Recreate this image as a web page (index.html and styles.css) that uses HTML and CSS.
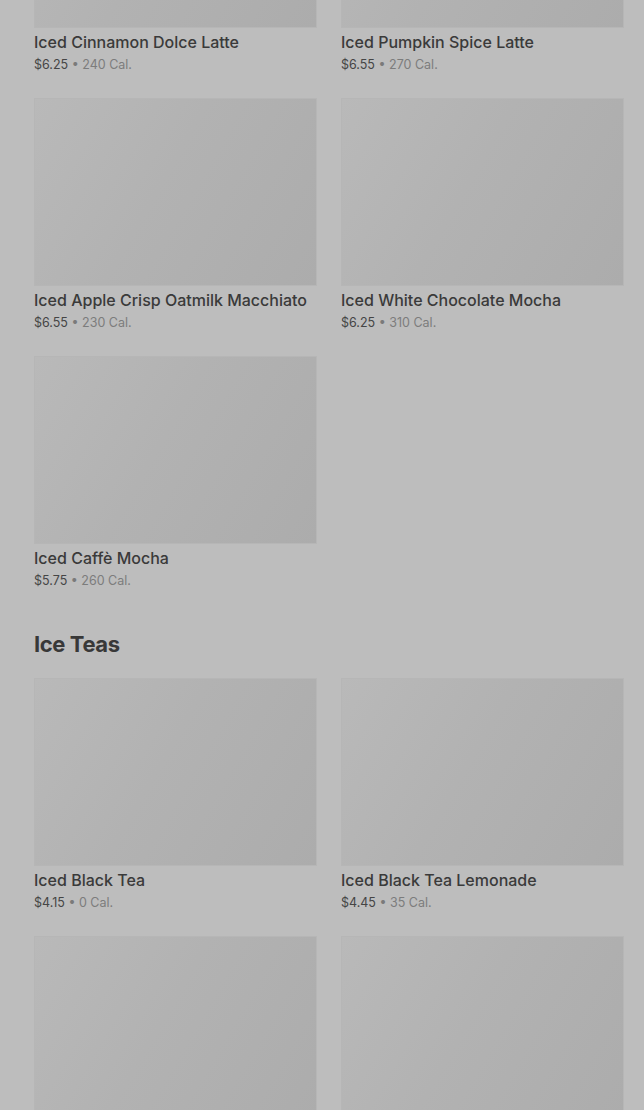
FILE: index.html
```html
<!DOCTYPE html>
<html lang="en">
<head>
    <meta charset="UTF-8">
    <meta name="viewport" content="width=device-width, initial-scale=1.0">
    <title>Menu - Iced Drinks</title>
    <link rel="stylesheet" href="styles.css">
</head>
<body>
    <div class="menu">
        <!-- Iced Coffees -->
        <section class="category first">
            <div class="product-grid">
                <div class="product">
                    <div class="product-img"></div>
                    <h3 class="product-name">Iced Cinnamon Dolce Latte</h3>
                    <p class="product-meta"><span class="price">$6.25</span> • <span class="cal">240 Cal.</span></p>
                </div>
                <div class="product">
                    <div class="product-img"></div>
                    <h3 class="product-name">Iced Pumpkin Spice Latte</h3>
                    <p class="product-meta"><span class="price">$6.55</span> • <span class="cal">270 Cal.</span></p>
                </div>
                <div class="product">
                    <div class="product-img"></div>
                    <h3 class="product-name">Iced Apple Crisp Oatmilk Macchiato</h3>
                    <p class="product-meta"><span class="price">$6.55</span> • <span class="cal">230 Cal.</span></p>
                </div>
                <div class="product">
                    <div class="product-img"></div>
                    <h3 class="product-name">Iced White Chocolate Mocha</h3>
                    <p class="product-meta"><span class="price">$6.25</span> • <span class="cal">310 Cal.</span></p>
                </div>
                <div class="product">
                    <div class="product-img"></div>
                    <h3 class="product-name">Iced Caffè Mocha</h3>
                    <p class="product-meta"><span class="price">$5.75</span> • <span class="cal">260 Cal.</span></p>
                </div>
            </div>
        </section>

        <!-- Ice Teas -->
        <section class="category">
            <h2 class="category-title">Ice Teas</h2>
            <div class="product-grid">
                <div class="product">
                    <div class="product-img"></div>
                    <h3 class="product-name">Iced Black Tea</h3>
                    <p class="product-meta"><span class="price">$4.15</span> • <span class="cal">0 Cal.</span></p>
                </div>
                <div class="product">
                    <div class="product-img"></div>
                    <h3 class="product-name">Iced Black Tea Lemonade</h3>
                    <p class="product-meta"><span class="price">$4.45</span> • <span class="cal">35 Cal.</span></p>
                </div>
                <div class="product">
                    <div class="product-img"></div>
                </div>
                <div class="product">
                    <div class="product-img"></div>
                </div>
            </div>
        </section>
    </div>
</body>
</html>
```

FILE: styles.css
```css
* {
    margin: 0;
    padding: 0;
    box-sizing: border-box;
}

body {
    background: #bdbdbd;
    font-family: 'Inter', 'Noto Sans', sans-serif;
    overflow: hidden;
    height: 1110px;
}

.menu {
    padding: 0 20px 0 34px;
}

.category.first {
    margin-top: -160px;
}

.category-title {
    font-size: 22px;
    font-weight: 700;
    color: #383838;
    letter-spacing: -0.4px;
    line-height: 28px;
    padding: 16px 0 20px;
}

.product-grid {
    display: grid;
    grid-template-columns: 1fr 1fr;
    column-gap: 24px;
}

.product {
    height: 258px;
}

.product-img {
    height: 188px;
    background: linear-gradient(120deg, #b9b9b9 0%, #b2b2b2 45%, #acacac 100%);
    border: 1px solid #b6b6b6;
    margin-bottom: 3px;
}

.product-name {
    font-size: 16px;
    font-weight: 500;
    color: #3a3a3a;
    line-height: 22px;
    letter-spacing: 0;
}

.product-meta {
    font-size: 12.5px;
    line-height: 22px;
    color: #7a7a7a;
    margin-top: 1px;
}

.price {
    color: #454545;
}

.cal {
    color: #7c7c7c;
}
```
